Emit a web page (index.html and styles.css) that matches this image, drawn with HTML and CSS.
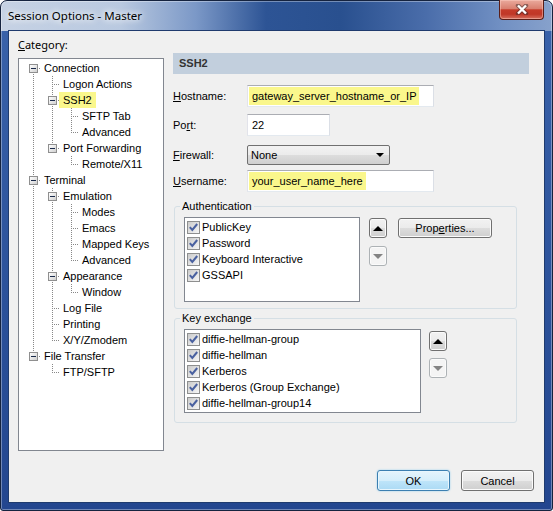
FILE: index.html
```html
<!DOCTYPE html>
<html lang="en">
<head>
    <meta charset="UTF-8">
    <title>Session Options - Master</title>
    <link rel="stylesheet" href="styles.css">
</head>
<body>
    <svg class="defs" aria-hidden="true">
        <symbol id="chk" viewBox="0 0 11 11">
            <path d="M1.8 5.2 L4.3 8 L9.2 2" fill="none" stroke="#4a61a0" stroke-width="2"/>
        </symbol>
    </svg>

    <div class="window">
        <div class="titlebar">
            <span class="title">Session Options - Master</span>
            <div class="close">
                <svg width="14" height="11" viewBox="0 0 14 11">
                    <path d="M3 1.5 L11 9.5 M11 1.5 L3 9.5" stroke="#3a2a2a" stroke-width="4.4" stroke-linecap="round" opacity="0.5"/>
                    <path d="M3 1.5 L11 9.5 M11 1.5 L3 9.5" stroke="#fff" stroke-width="2.4"/>
                </svg>
            </div>
        </div>

        <div class="client">
            <div class="main">
                <div class="left">
                    <div class="cat-label"><u>C</u>ategory:</div>
                    <div class="tree">
                        <div class="row"><span class="g f"><i class="exp"></i></span><span class="lbl">Connection</span></div>
                        <div class="row"><span class="g v"></span><span class="g t"></span><span class="lbl">Logon Actions</span></div>
                        <div class="row"><span class="g v"></span><span class="g t"><i class="exp"></i></span><span class="lbl sel">SSH2</span></div>
                        <div class="row"><span class="g v"></span><span class="g v"></span><span class="g t"></span><span class="lbl">SFTP Tab</span></div>
                        <div class="row"><span class="g v"></span><span class="g v"></span><span class="g l"></span><span class="lbl">Advanced</span></div>
                        <div class="row"><span class="g v"></span><span class="g l"><i class="exp"></i></span><span class="lbl">Port Forwarding</span></div>
                        <div class="row"><span class="g v"></span><span class="g"></span><span class="g l"></span><span class="lbl">Remote/X11</span></div>
                        <div class="row"><span class="g t"><i class="exp"></i></span><span class="lbl">Terminal</span></div>
                        <div class="row"><span class="g v"></span><span class="g t"><i class="exp"></i></span><span class="lbl">Emulation</span></div>
                        <div class="row"><span class="g v"></span><span class="g v"></span><span class="g t"></span><span class="lbl">Modes</span></div>
                        <div class="row"><span class="g v"></span><span class="g v"></span><span class="g t"></span><span class="lbl">Emacs</span></div>
                        <div class="row"><span class="g v"></span><span class="g v"></span><span class="g t"></span><span class="lbl">Mapped Keys</span></div>
                        <div class="row"><span class="g v"></span><span class="g v"></span><span class="g l"></span><span class="lbl">Advanced</span></div>
                        <div class="row"><span class="g v"></span><span class="g t"><i class="exp"></i></span><span class="lbl">Appearance</span></div>
                        <div class="row"><span class="g v"></span><span class="g v"></span><span class="g l"></span><span class="lbl">Window</span></div>
                        <div class="row"><span class="g v"></span><span class="g t"></span><span class="lbl">Log File</span></div>
                        <div class="row"><span class="g v"></span><span class="g t"></span><span class="lbl">Printing</span></div>
                        <div class="row"><span class="g v"></span><span class="g l"></span><span class="lbl">X/Y/Zmodem</span></div>
                        <div class="row"><span class="g l"><i class="exp"></i></span><span class="lbl">File Transfer</span></div>
                        <div class="row"><span class="g"></span><span class="g l"></span><span class="lbl">FTP/SFTP</span></div>
                    </div>
                </div>

                <div class="right">
                    <div class="page-head">SSH2</div>

                    <div class="field f-host">
                        <label><u>H</u>ostname:</label>
                        <div class="edit w-wide"><span class="hl">gateway_server_hostname_or_IP</span></div>
                    </div>
                    <div class="field f-port">
                        <label>Po<u>r</u>t:</label>
                        <div class="edit w-port">22</div>
                    </div>
                    <div class="field f-fw">
                        <label><u>F</u>irewall:</label>
                        <div class="combo"><span>None</span><i class="caret"></i></div>
                    </div>
                    <div class="field f-user">
                        <label><u>U</u>sername:</label>
                        <div class="edit w-wide"><span class="hl">your_user_name_here</span></div>
                    </div>

                    <fieldset class="group g-auth">
                        <legend>Authentication</legend>
                        <div class="group-body">
                            <div class="list l-auth">
                                <div class="item"><svg class="cb"><use href="#chk"/></svg>PublicKey</div>
                                <div class="item"><svg class="cb"><use href="#chk"/></svg>Password</div>
                                <div class="item"><svg class="cb"><use href="#chk"/></svg>Keyboard Interactive</div>
                                <div class="item"><svg class="cb"><use href="#chk"/></svg>GSSAPI</div>
                            </div>
                            <div class="arrows">
                                <button class="arr up"></button>
                                <button class="arr down"></button>
                            </div>
                            <button class="btn props">Prop<u>e</u>rties...</button>
                        </div>
                    </fieldset>

                    <fieldset class="group g-kex">
                        <legend>Key exchange</legend>
                        <div class="group-body">
                            <div class="list l-kex">
                                <div class="item"><svg class="cb"><use href="#chk"/></svg>diffie-hellman-group</div>
                                <div class="item"><svg class="cb"><use href="#chk"/></svg>diffie-hellman</div>
                                <div class="item"><svg class="cb"><use href="#chk"/></svg>Kerberos</div>
                                <div class="item"><svg class="cb"><use href="#chk"/></svg>Kerberos (Group Exchange)</div>
                                <div class="item"><svg class="cb"><use href="#chk"/></svg>diffie-hellman-group14</div>
                            </div>
                            <div class="arrows">
                                <button class="arr up"></button>
                                <button class="arr down"></button>
                            </div>
                        </div>
                    </fieldset>
                </div>
            </div>

            <div class="footer">
                <button class="btn ok">OK</button>
                <button class="btn">Cancel</button>
            </div>
        </div>
    </div>
</body>
</html>
```

FILE: styles.css
```css
body {
    margin: 0;
    background: #fff;
    font-family: "Liberation Sans", Arial, sans-serif;
    font-size: 11px;
    color: #000;
}

.defs {
    position: absolute;
    width: 0;
    height: 0;
}

/* window frame */
.window {
    width: 553px;
    height: 511px;
    box-sizing: border-box;
    border: 1px solid #15233f;
    border-radius: 7px 7px 3px 3px;
    padding: 0 7px 7px;
    display: flex;
    flex-direction: column;
    background:
        linear-gradient(to right, #c6d2e4 0, #b9c9e0 120px, #7b98c7 195px, #2d5495 265px, #29508f 340px, #4a6daa 425px, #7190c3 500px, #88a2cc 553px) 0 0 / 100% 30px no-repeat,
        linear-gradient(to bottom, #3a63ab, #2b519a 60%, #23468f);
    box-shadow: inset 0 0 0 1px rgba(255, 255, 255, 0.35);
}

.titlebar {
    height: 29px;
    display: flex;
    justify-content: space-between;
    align-items: center;
}

.title {
    font-family: "Noto Sans", "Open Sans", sans-serif;
    font-size: 11.5px;
    text-shadow: 0 0 6px #fff, 0 0 8px #fff;
}

.close {
    align-self: flex-start;
    margin: -1px 1px 0 0;
    width: 45px;
    height: 20px;
    box-sizing: border-box;
    border: 1px solid #5a1e18;
    border-top: none;
    border-radius: 0 0 4px 4px;
    background: linear-gradient(#eaaa9d, #d98070 45%, #c53b2a 52%, #c03727 75%, #d6705f);
    box-shadow: inset 0 0 0 1px rgba(255, 210, 200, 0.45);
    display: flex;
    align-items: center;
    justify-content: center;
}

.client {
    height: 473px;
    box-sizing: border-box;
    border: 1px solid #1f3b6e;
    background: #f0f0f0;
    display: flex;
    flex-direction: column;
}

.main {
    display: flex;
    gap: 9px;
    padding-left: 9px;
}

/* category tree */
.left {
    width: 146px;
}

.cat-label {
    font-family: "Noto Sans", "Open Sans", sans-serif;
    margin: 6px 0;
    height: 15px;
    line-height: 15px;
}

.tree {
    height: 393px;
    box-sizing: border-box;
    border: 1px solid #828790;
    background: #fff;
    padding: 1px 0 0 5px;
    --dv: repeating-linear-gradient(to bottom, #888 0 1px, transparent 1px 2px);
    --dh: repeating-linear-gradient(to right, #888 0 1px, transparent 1px 2px);
}

.row {
    display: flex;
    height: 16px;
    line-height: 16px;
    white-space: nowrap;
}

.g {
    flex: none;
    width: 19px;
    height: 16px;
}

.g.v {
    background: var(--dv) 9px 0 / 1px 16px no-repeat;
}

.g.t {
    background: var(--dh) 11px 8px / 6px 1px no-repeat, var(--dv) 9px 0 / 1px 16px no-repeat;
}

.g.l {
    background: var(--dh) 11px 8px / 6px 1px no-repeat, var(--dv) 9px 0 / 1px 9px no-repeat;
}

.g.f {
    background: var(--dh) 11px 8px / 6px 1px no-repeat, var(--dv) 9px 8px / 1px 8px no-repeat;
}

.exp {
    display: block;
    width: 9px;
    height: 9px;
    box-sizing: border-box;
    margin: 4px 0 0 5px;
    border: 1px solid #8f8f8f;
    background:
        linear-gradient(#1a2a4a, #1a2a4a) center / 5px 1px no-repeat,
        linear-gradient(135deg, #ffffff, #d0d0d0);
}

.lbl {
    margin-left: -3px;
    padding: 0 4px;
}

.lbl.sel {
    background: #faf78c;
}

/* right page */
.right {
    width: 356px;
}

.page-head {
    margin-top: 22px;
    height: 21px;
    line-height: 21px;
    padding-left: 6px;
    background: #c2cfdd;
    font-weight: bold;
    color: #333;
}

.field {
    display: flex;
    align-items: center;
}

.field label {
    width: 74px;
}

.f-host { margin-top: 11px; }
.f-port { margin-top: 7px; }
.f-fw { margin-top: 9px; }
.f-user { margin-top: 5px; }

.edit {
    height: 22px;
    box-sizing: border-box;
    border: 1px solid;
    border-color: #abadb3 #dbdfe6 #e3e9ef #e2e3ea;
    background: #fff;
    display: flex;
    align-items: center;
    padding: 0 1px;
}

.w-wide {
    width: 187px;
}

.w-port {
    width: 83px;
    padding-left: 4px;
}

.hl {
    background: #faf78c;
    line-height: 18px;
    padding: 0 3px;
}

.combo {
    width: 143px;
    height: 20px;
    box-sizing: border-box;
    border: 1px solid #707070;
    border-radius: 2px;
    background: linear-gradient(#f2f2f2, #ebebeb 50%, #dddddd 50%, #cfcfcf);
    display: flex;
    align-items: center;
    justify-content: space-between;
    padding: 0 5px 0 3px;
}

.caret {
    width: 0;
    height: 0;
    border-left: 4px solid transparent;
    border-right: 4px solid transparent;
    border-top: 4px solid #000;
}

/* group boxes */
.group {
    margin: 8px 0 0 1px;
    width: 343px;
    box-sizing: border-box;
    border: 1px solid #d5dfe5;
    border-radius: 3px;
    padding: 4px 0 6px 5px;
}

.group legend {
    padding: 0 2px;
    line-height: 13px;
}

.g-kex {
    margin-top: 3px;
    padding-bottom: 9px;
}

.group-body {
    display: flex;
    align-items: flex-start;
    margin-left: 4px;
}

.list {
    box-sizing: border-box;
    border: 1px solid #828790;
    background: #fff;
    padding: 1px 0 0 2px;
}

.l-auth {
    width: 176px;
    height: 85px;
}

.l-kex {
    width: 237px;
    height: 84px;
}

.item {
    display: flex;
    align-items: center;
    gap: 2px;
    height: 16px;
    white-space: nowrap;
}

.cb {
    flex: none;
    width: 13px;
    height: 13px;
    box-sizing: border-box;
    border: 1px solid #8e8f8f;
    background: linear-gradient(135deg, #cbcbcb, #f6f6f6);
}

.arrows {
    display: flex;
    flex-direction: column;
    gap: 8px;
    margin: 1px 0 0 9px;
}

.g-kex .arrows {
    gap: 7px;
    margin: 2px 0 0 8px;
}

.arr {
    width: 18px;
    height: 20px;
    box-sizing: border-box;
    padding: 0;
    border: 1px solid #707070;
    border-radius: 3px;
    background: linear-gradient(#f2f2f2, #ebebeb 50%, #dddddd 50%, #cfcfcf);
    box-shadow: inset 0 0 0 1px #fbfbfb;
    display: flex;
    align-items: center;
    justify-content: center;
}

.arr.up::before {
    content: "";
    border-left: 5px solid transparent;
    border-right: 5px solid transparent;
    border-bottom: 5px solid #000;
}

.arr.down {
    border-color: #adb2b5;
    background: #f4f4f4;
}

.arr.down::before {
    content: "";
    border-left: 5px solid transparent;
    border-right: 5px solid transparent;
    border-top: 5px solid #838383;
}

/* push buttons */
.btn {
    box-sizing: border-box;
    height: 21px;
    padding: 0;
    border: 1px solid #707070;
    border-radius: 3px;
    background: linear-gradient(#f2f2f2, #ebebeb 50%, #dddddd 50%, #cfcfcf);
    box-shadow: inset 0 0 0 1px #fbfbfb;
    font: inherit;
    color: #000;
}

.props {
    width: 94px;
    height: 20px;
    margin: 1px 0 0 11px;
}

.footer {
    margin-top: auto;
    display: flex;
    justify-content: flex-end;
    gap: 11px;
    padding: 0 10px 11px 0;
}

.footer .btn {
    width: 73px;
}

.btn.ok {
    border-color: #3c7fb1;
    background: linear-gradient(#e5f4fc, #d5eefb 50%, #bfe5fa 50%, #abdaf4);
    box-shadow: inset 0 0 0 1px #e8f6fd, 0 0 2px #8fcdef;
}
```
